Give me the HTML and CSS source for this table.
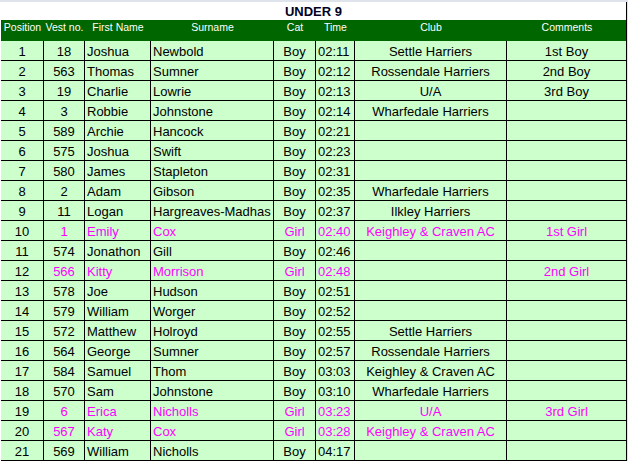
FILE: index.html
```html
<!DOCTYPE html>
<html>
<head>
<meta charset="utf-8">
<link rel="stylesheet" href="styles.css">
</head>
<body>
<div class="sheet">
  <div class="title">UNDER 9</div>
  <div class="row head">
    <div class="c">Position</div><div class="c">Vest no.</div><div class="c">First Name</div><div class="c">Surname</div><div class="c">Cat</div><div class="c">Time</div><div class="c">Club</div><div class="c">Comments</div>
  </div>
  <div class="row"><div class="c">1</div><div class="c">18</div><div class="l">Joshua</div><div class="l">Newbold</div><div class="c">Boy</div><div class="l">02:11</div><div class="c">Settle Harriers</div><div class="c">1st Boy</div></div>
  <div class="row"><div class="c">2</div><div class="c">563</div><div class="l">Thomas</div><div class="l">Sumner</div><div class="c">Boy</div><div class="l">02:12</div><div class="c">Rossendale Harriers</div><div class="c">2nd Boy</div></div>
  <div class="row"><div class="c">3</div><div class="c">19</div><div class="l">Charlie</div><div class="l">Lowrie</div><div class="c">Boy</div><div class="l">02:13</div><div class="c">U/A</div><div class="c">3rd Boy</div></div>
  <div class="row"><div class="c">4</div><div class="c">3</div><div class="l">Robbie</div><div class="l">Johnstone</div><div class="c">Boy</div><div class="l">02:14</div><div class="c">Wharfedale Harriers</div><div class="c"></div></div>
  <div class="row"><div class="c">5</div><div class="c">589</div><div class="l">Archie</div><div class="l">Hancock</div><div class="c">Boy</div><div class="l">02:21</div><div class="c"></div><div class="c"></div></div>
  <div class="row"><div class="c">6</div><div class="c">575</div><div class="l">Joshua</div><div class="l">Swift</div><div class="c">Boy</div><div class="l">02:23</div><div class="c"></div><div class="c"></div></div>
  <div class="row"><div class="c">7</div><div class="c">580</div><div class="l">James</div><div class="l">Stapleton</div><div class="c">Boy</div><div class="l">02:31</div><div class="c"></div><div class="c"></div></div>
  <div class="row"><div class="c">8</div><div class="c">2</div><div class="l">Adam</div><div class="l">Gibson</div><div class="c">Boy</div><div class="l">02:35</div><div class="c">Wharfedale Harriers</div><div class="c"></div></div>
  <div class="row"><div class="c">9</div><div class="c">11</div><div class="l">Logan</div><div class="l">Hargreaves-Madhas</div><div class="c">Boy</div><div class="l">02:37</div><div class="c">Ilkley Harriers</div><div class="c"></div></div>
  <div class="row girl"><div class="c">10</div><div class="c">1</div><div class="l">Emily</div><div class="l">Cox</div><div class="c">Girl</div><div class="l">02:40</div><div class="c">Keighley &amp; Craven AC</div><div class="c">1st Girl</div></div>
  <div class="row"><div class="c">11</div><div class="c">574</div><div class="l">Jonathon</div><div class="l">Gill</div><div class="c">Boy</div><div class="l">02:46</div><div class="c"></div><div class="c"></div></div>
  <div class="row girl"><div class="c">12</div><div class="c">566</div><div class="l">Kitty</div><div class="l">Morrison</div><div class="c">Girl</div><div class="l">02:48</div><div class="c"></div><div class="c">2nd Girl</div></div>
  <div class="row"><div class="c">13</div><div class="c">578</div><div class="l">Joe</div><div class="l">Hudson</div><div class="c">Boy</div><div class="l">02:51</div><div class="c"></div><div class="c"></div></div>
  <div class="row"><div class="c">14</div><div class="c">579</div><div class="l">William</div><div class="l">Worger</div><div class="c">Boy</div><div class="l">02:52</div><div class="c"></div><div class="c"></div></div>
  <div class="row"><div class="c">15</div><div class="c">572</div><div class="l">Matthew</div><div class="l">Holroyd</div><div class="c">Boy</div><div class="l">02:55</div><div class="c">Settle Harriers</div><div class="c"></div></div>
  <div class="row"><div class="c">16</div><div class="c">564</div><div class="l">George</div><div class="l">Sumner</div><div class="c">Boy</div><div class="l">02:57</div><div class="c">Rossendale Harriers</div><div class="c"></div></div>
  <div class="row"><div class="c">17</div><div class="c">584</div><div class="l">Samuel</div><div class="l">Thom</div><div class="c">Boy</div><div class="l">03:03</div><div class="c">Keighley &amp; Craven AC</div><div class="c"></div></div>
  <div class="row"><div class="c">18</div><div class="c">570</div><div class="l">Sam</div><div class="l">Johnstone</div><div class="c">Boy</div><div class="l">03:10</div><div class="c">Wharfedale Harriers</div><div class="c"></div></div>
  <div class="row girl"><div class="c">19</div><div class="c">6</div><div class="l">Erica</div><div class="l">Nicholls</div><div class="c">Girl</div><div class="l">03:23</div><div class="c">U/A</div><div class="c">3rd Girl</div></div>
  <div class="row girl"><div class="c">20</div><div class="c">567</div><div class="l">Katy</div><div class="l">Cox</div><div class="c">Girl</div><div class="l">03:28</div><div class="c">Keighley &amp; Craven AC</div><div class="c"></div></div>
  <div class="row"><div class="c">21</div><div class="c">569</div><div class="l">William</div><div class="l">Nicholls</div><div class="c">Boy</div><div class="l">04:17</div><div class="c"></div><div class="c"></div></div>
</div>
</body>
</html>
```

FILE: styles.css
```css
html, body {
  margin: 0;
  padding: 0;
}
body {
  background: #dfe4ec;
  font-family: "Liberation Sans", Arial, sans-serif;
  color: #000;
  width: 628px;
  height: 461px;
  overflow: hidden;
}
.sheet {
  margin-top: 2px;
  width: 627px;
  padding-left: 1px;
  box-sizing: border-box;
  background: #ffffff;
}
.title {
  height: 18px;
  box-sizing: border-box;
  border-right: 1px solid #000;
  text-align: center;
  font-weight: bold;
  font-size: 13px;
  line-height: 18px;
  padding-top: 1px;
  color: #000022;
}
.row {
  display: grid;
  grid-template-columns: 43px 41px 66px 123px 42px 39px 152px 120px;
  height: 20px;
  background: #ccffcc;
  font-size: 13px;
}
.row > div {
  box-sizing: border-box;
  border-right: 1px solid #000;
  border-bottom: 1px solid #000;
  padding: 3px 2px 0;
  line-height: 16px;
  white-space: nowrap;
  overflow: hidden;
}
.row .c { text-align: center; }
.row .l { text-align: left; }
.head {
  height: 21px;
  background: #006600;
  color: #ffffff;
  font-size: 10.5px;
  border-right: 1px solid #000;
  width: 626px;
  box-sizing: border-box;
}
.head > div {
  border: none;
  padding: 1px 0 0;
  line-height: 12px;
}
.girl > div { color: #ff00ff; }
.girl > div:first-child { color: #000; }
```
